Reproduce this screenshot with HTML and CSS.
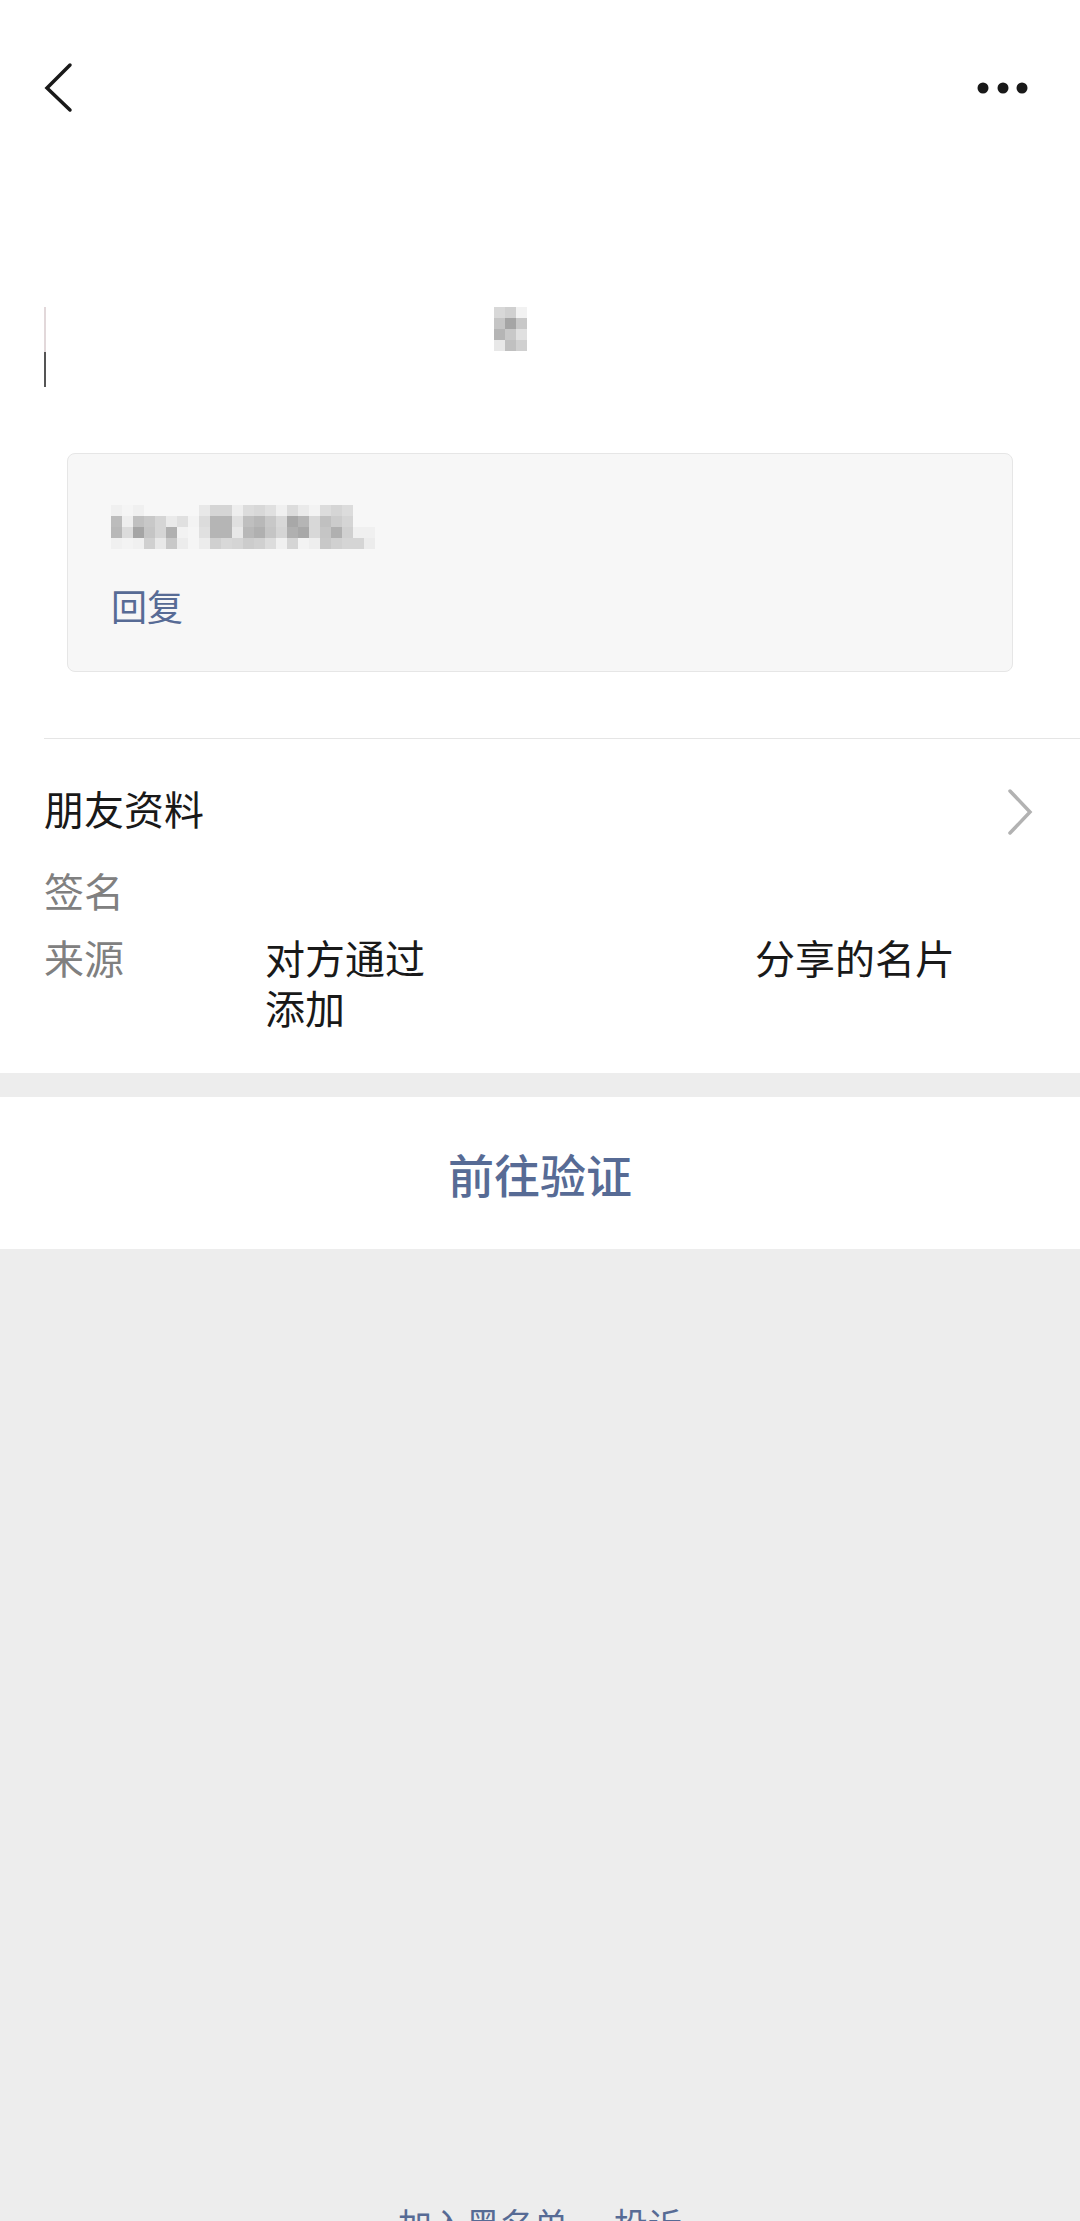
FILE: index.html
```html
<!DOCTYPE html>
<html lang="zh-CN">
<head>
  <meta charset="UTF-8">
  <title>朋友验证</title>
  <link rel="stylesheet" href="styles.css">
</head>
<body>
  <div class="page">
    <div class="main">
      <div class="status"></div>

      <div class="nav">
        <svg class="back" width="40" height="60" viewBox="0 0 40 60">
          <polyline points="30,7 7,30 30,52" fill="none" stroke="#191919" stroke-width="3.5" stroke-linecap="round" stroke-linejoin="miter"/>
        </svg>
        <svg class="more" width="60" height="20" viewBox="0 0 60 20">
          <circle cx="10" cy="10" r="5.5" fill="#191919"/>
          <circle cx="30" cy="10" r="5.5" fill="#191919"/>
          <circle cx="49" cy="10" r="5.5" fill="#191919"/>
        </svg>
      </div>

      <!-- 昵称（已打码） -->
      <div class="profile">
        <div class="edge"></div>
        <svg class="mosaic-name" width="33" height="44" viewBox="0 0 33 44" shape-rendering="crispEdges">
          <rect x="0" y="0" width="11" height="11" fill="#d8d8d8"/>
          <rect x="11" y="0" width="11" height="11" fill="#d0d0d0"/>
          <rect x="22" y="0" width="11" height="11" fill="#f2f2f2"/>
          <rect x="0" y="11" width="11" height="11" fill="#c5c5c5"/>
          <rect x="11" y="11" width="11" height="11" fill="#a5a5a5"/>
          <rect x="22" y="11" width="11" height="11" fill="#c8c8c8"/>
          <rect x="0" y="22" width="11" height="11" fill="#b5b5b5"/>
          <rect x="11" y="22" width="11" height="11" fill="#c8c8c8"/>
          <rect x="22" y="22" width="11" height="11" fill="#e0e0e0"/>
          <rect x="0" y="33" width="11" height="11" fill="#e8e8e8"/>
          <rect x="11" y="33" width="11" height="11" fill="#c0c0c0"/>
          <rect x="22" y="33" width="11" height="11" fill="#d0d0d0"/>
        </svg>
      </div>

      <!-- 验证消息 -->
      <div class="card">
        <svg class="mosaic-msg" width="264" height="44" viewBox="0 0 264 44" shape-rendering="crispEdges">
          <g>
            <rect x="0" y="0" width="11" height="11" fill="#f0f0f0"/>
            <rect x="11" y="0" width="11" height="11" fill="#f5f5f5"/>
            <rect x="22" y="0" width="11" height="11" fill="#f0f0f0"/>
            <rect x="88" y="0" width="11" height="11" fill="#e8e8e8"/>
            <rect x="99" y="0" width="22" height="11" fill="#d5d5d5"/>
            <rect x="121" y="0" width="11" height="11" fill="#eeeeee"/>
            <rect x="132" y="0" width="11" height="11" fill="#dcdcdc"/>
            <rect x="143" y="0" width="11" height="11" fill="#d8d8d8"/>
            <rect x="154" y="0" width="11" height="11" fill="#e0e0e0"/>
            <rect x="165" y="0" width="11" height="11" fill="#f0f0f0"/>
            <rect x="176" y="0" width="11" height="11" fill="#dcdcdc"/>
            <rect x="187" y="0" width="11" height="11" fill="#eaeaea"/>
            <rect x="198" y="0" width="11" height="11" fill="#f3f3f3"/>
            <rect x="209" y="0" width="11" height="11" fill="#dcdcdc"/>
            <rect x="220" y="0" width="11" height="11" fill="#d5d5d5"/>
            <rect x="231" y="0" width="11" height="11" fill="#dcdcdc"/>
          </g>
          <g>
            <rect x="0" y="11" width="11" height="11" fill="#bcbcbc"/>
            <rect x="11" y="11" width="11" height="11" fill="#eeeeee"/>
            <rect x="22" y="11" width="11" height="11" fill="#c0c0c0"/>
            <rect x="33" y="11" width="11" height="11" fill="#c8c8c8"/>
            <rect x="44" y="11" width="11" height="11" fill="#d5d5d5"/>
            <rect x="55" y="11" width="11" height="11" fill="#eaeaea"/>
            <rect x="66" y="11" width="11" height="11" fill="#e0e0e0"/>
            <rect x="77" y="11" width="11" height="11" fill="#f3f3f3"/>
            <rect x="88" y="11" width="11" height="11" fill="#dcdcdc"/>
            <rect x="99" y="11" width="22" height="11" fill="#b5b5b5"/>
            <rect x="121" y="11" width="11" height="11" fill="#e0e0e0"/>
            <rect x="132" y="11" width="11" height="11" fill="#bfbfbf"/>
            <rect x="143" y="11" width="11" height="11" fill="#b8b8b8"/>
            <rect x="154" y="11" width="11" height="11" fill="#c8c8c8"/>
            <rect x="165" y="11" width="11" height="11" fill="#d8d8d8"/>
            <rect x="176" y="11" width="11" height="11" fill="#a8a8a8"/>
            <rect x="187" y="11" width="11" height="11" fill="#b5b5b5"/>
            <rect x="198" y="11" width="11" height="11" fill="#d8d8d8"/>
            <rect x="209" y="11" width="11" height="11" fill="#c0c0c0"/>
            <rect x="220" y="11" width="11" height="11" fill="#cccccc"/>
            <rect x="231" y="11" width="11" height="11" fill="#d5d5d5"/>
          </g>
          <g>
            <rect x="0" y="22" width="11" height="11" fill="#b8b8b8"/>
            <rect x="11" y="22" width="11" height="11" fill="#dcdcdc"/>
            <rect x="22" y="22" width="11" height="11" fill="#a5a5a5"/>
            <rect x="33" y="22" width="11" height="11" fill="#c5c5c5"/>
            <rect x="44" y="22" width="11" height="11" fill="#d5d5d5"/>
            <rect x="55" y="22" width="11" height="11" fill="#b0b0b0"/>
            <rect x="66" y="22" width="11" height="11" fill="#f2f2f2"/>
            <rect x="77" y="22" width="11" height="11" fill="#f5f5f5"/>
            <rect x="88" y="22" width="11" height="11" fill="#e0e0e0"/>
            <rect x="99" y="22" width="22" height="11" fill="#b5b5b5"/>
            <rect x="121" y="22" width="11" height="11" fill="#e8e8e8"/>
            <rect x="132" y="22" width="11" height="11" fill="#b8b8b8"/>
            <rect x="143" y="22" width="11" height="11" fill="#b0b0b0"/>
            <rect x="154" y="22" width="11" height="11" fill="#c5c5c5"/>
            <rect x="165" y="22" width="11" height="11" fill="#d5d5d5"/>
            <rect x="176" y="22" width="11" height="11" fill="#b0b0b0"/>
            <rect x="187" y="22" width="11" height="11" fill="#a8a8a8"/>
            <rect x="198" y="22" width="11" height="11" fill="#d8d8d8"/>
            <rect x="209" y="22" width="11" height="11" fill="#c5c5c5"/>
            <rect x="220" y="22" width="11" height="11" fill="#b0b0b0"/>
            <rect x="231" y="22" width="11" height="11" fill="#d0d0d0"/>
            <rect x="242" y="22" width="22" height="11" fill="#f0f0f0"/>
          </g>
          <g>
            <rect x="0" y="33" width="11" height="11" fill="#f0f0f0"/>
            <rect x="11" y="33" width="11" height="11" fill="#f3f3f3"/>
            <rect x="22" y="33" width="11" height="11" fill="#f0f0f0"/>
            <rect x="33" y="33" width="11" height="11" fill="#d0d0d0"/>
            <rect x="44" y="33" width="11" height="11" fill="#e8e8e8"/>
            <rect x="55" y="33" width="11" height="11" fill="#c8c8c8"/>
            <rect x="66" y="33" width="11" height="11" fill="#ececec"/>
            <rect x="77" y="33" width="11" height="11" fill="#f5f5f5"/>
            <rect x="88" y="33" width="11" height="11" fill="#ececec"/>
            <rect x="99" y="33" width="11" height="11" fill="#d0d0d0"/>
            <rect x="110" y="33" width="11" height="11" fill="#d8d8d8"/>
            <rect x="121" y="33" width="11" height="11" fill="#d5d5d5"/>
            <rect x="132" y="33" width="11" height="11" fill="#cccccc"/>
            <rect x="143" y="33" width="11" height="11" fill="#d0d0d0"/>
            <rect x="154" y="33" width="11" height="11" fill="#dcdcdc"/>
            <rect x="165" y="33" width="11" height="11" fill="#f0f0f0"/>
            <rect x="176" y="33" width="11" height="11" fill="#d5d5d5"/>
            <rect x="187" y="33" width="11" height="11" fill="#f3f3f3"/>
            <rect x="198" y="33" width="11" height="11" fill="#eeeeee"/>
            <rect x="209" y="33" width="11" height="11" fill="#c8c8c8"/>
            <rect x="220" y="33" width="11" height="11" fill="#d0d0d0"/>
            <rect x="231" y="33" width="22" height="11" fill="#d5d5d5"/>
            <rect x="253" y="33" width="11" height="11" fill="#ececec"/>
          </g>
        </svg>
        <div class="reply">回复</div>
      </div>

      <div class="divider"></div>

      <div class="info">
        <div class="row-link">
          <span>朋友资料</span>
          <svg width="30" height="56" viewBox="0 0 30 56">
            <polyline points="5,11 25,32 5,53" fill="none" stroke="#b2b2b2" stroke-width="3.5" stroke-linecap="round"/>
          </svg>
        </div>
        <div class="row">
          <div class="label">签名</div>
          <div class="value"></div>
        </div>
        <div class="row source">
          <div class="label">来源</div>
          <div class="value">对方通过<span class="redact"></span>分享的名片<br>添加</div>
        </div>
      </div>
    </div>

    <div class="action">前往验证</div>

    <div class="filler"></div>

    <div class="footer">加入黑名单<span class="sep"></span>投诉</div>
  </div>
</body>
</html>
```

FILE: styles.css
```css
html, body { margin: 0; padding: 0; }
body {
  width: 1080px;
  height: 2221px;
  overflow: hidden;
  background: #ededed;
  font-family: "Noto Sans CJK SC", "Noto Sans", sans-serif;
  color: #191919;
}

.page { display: flex; flex-direction: column; height: 2221px; }

.main { background: #fff; padding-bottom: 41px; }

.status { height: 40px; }
.nav { height: 96px; display: flex; align-items: center; justify-content: space-between; padding: 0 47px 0 40px; }
.nav svg { display: block; }

.profile { margin-top: 171px; height: 80px; padding-left: 44px; display: flex; align-items: flex-start; }
.profile .edge { width: 2px; height: 80px; background: linear-gradient(#e2d8da 0, #e2d8da 45px, #555 45px, #555 80px); }
.mosaic-name { display: block; margin-left: 448px; }

.card {
  margin: 66px 67px 0;
  padding: 51px 43px 41px;
  background: #f7f7f7;
  border: 1px solid #e6e6e6;
  border-radius: 8px;
}
.mosaic-msg { display: block; }
.reply { margin-top: 31px; font-size: 36px; line-height: 50px; color: #576b95; }

.divider { margin: 66px 0 0 44px; height: 1px; background: #e5e5e5; }

.info { padding: 0 45px 0 44px; }
.row-link { display: flex; align-items: center; justify-content: space-between; padding: 41px 0 29px; font-size: 40px; line-height: 56px; }
.row-link svg { display: block; }
.row { display: flex; font-size: 40px; line-height: 50px; }
.row.source { margin-top: 17px; }
.label { width: 221px; flex: none; color: #808080; }
.value { flex: 1; color: #191919; min-height: 50px; }
.redact { display: inline-block; width: 330px; height: 1px; }

.action {
  margin-top: 24px;
  height: 152px;
  background: #fff;
  display: flex;
  align-items: center;
  justify-content: center;
  font-size: 46px;
  font-weight: 500;
  color: #576b95;
}

.filler { flex: 1; }

.footer { text-align: center; font-size: 34px; line-height: 48px; color: #576b95; margin-bottom: -27px; flex: none; }
.footer .sep { display: inline-block; width: 46px; }
```
